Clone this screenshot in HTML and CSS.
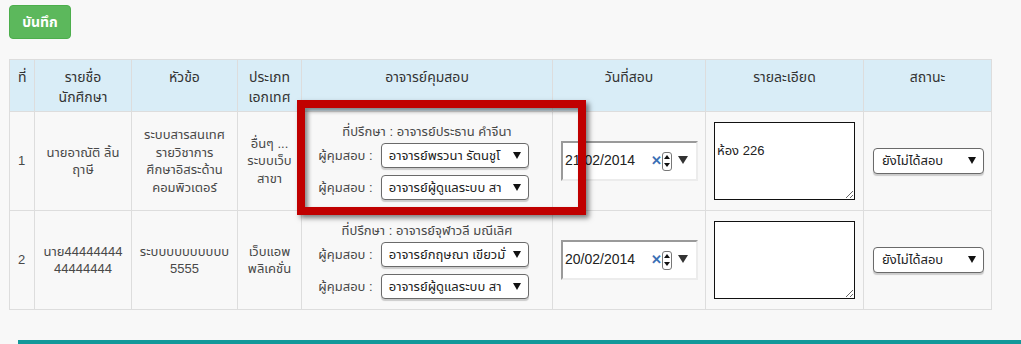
FILE: index.html
```html
<!DOCTYPE html>
<html lang="th">
<head>
<meta charset="utf-8">
<link rel="stylesheet" href="styles.css">
</head>
<body>
<div class="page">
  <button class="btn-save">บันทึก</button>
  <table class="grid">
    <colgroup>
      <col class="c1"><col class="c2"><col class="c3"><col class="c4"><col class="c5"><col class="c6"><col class="c7"><col class="c8">
    </colgroup>
    <thead>
      <tr>
        <th>ที่</th>
        <th>รายชื่อ<br>นักศึกษา</th>
        <th>หัวข้อ</th>
        <th>ประเภท<br>เอกเทศ</th>
        <th>อาจารย์คุมสอบ</th>
        <th>วันที่สอบ</th>
        <th>รายละเอียด</th>
        <th>สถานะ</th>
      </tr>
    </thead>
    <tbody>
      <tr>
        <td>1</td>
        <td>นายอาณัติ ลิ้น<br>ฤาษี</td>
        <td>ระบบสารสนเทศ<br>รายวิชาการ<br>ศึกษาอิสระด้าน<br>คอมพิวเตอร์</td>
        <td>อื่นๆ ...<br>ระบบเว็บ<br>สาขา</td>
        <td>
          <div class="advisor">ที่ปรึกษา : อาจารย์ประธาน คำจีนา</div>
          <div class="examiner"><span class="lbl">ผู้คุมสอบ :</span><div class="sel"><span class="sel-text">อาจารย์พรวนา รัตนชูโ</span><span class="caret"></span></div></div>
          <div class="examiner"><span class="lbl">ผู้คุมสอบ :</span><div class="sel"><span class="sel-text">อาจารย์ผู้ดูแลระบบ สา</span><span class="caret"></span></div></div>
        </td>
        <td>
          <div class="date">
            <span class="date-text">21/02/2014</span>
            <span class="clear">✕</span>
            <span class="spin"><span class="up"></span><span class="dn"></span></span>
            <span class="drop"></span>
          </div>
        </td>
        <td><textarea class="note">

ห้อง 226</textarea></td>
        <td><div class="sel status"><span class="sel-text">ยังไม่ได้สอบ</span><span class="caret"></span></div></td>
      </tr>
      <tr>
        <td>2</td>
        <td>นาย44444444<br>44444444</td>
        <td>ระบบบบบบบบบบ<br>5555</td>
        <td>เว็บแอพ<br>พลิเคชั่น</td>
        <td>
          <div class="advisor">ที่ปรึกษา : อาจารย์จุฬาวลี มณีเลิศ</div>
          <div class="examiner"><span class="lbl">ผู้คุมสอบ :</span><div class="sel"><span class="sel-text">อาจารย์กฤษณา เขียวมั่</span><span class="caret"></span></div></div>
          <div class="examiner"><span class="lbl">ผู้คุมสอบ :</span><div class="sel"><span class="sel-text">อาจารย์ผู้ดูแลระบบ สา</span><span class="caret"></span></div></div>
        </td>
        <td>
          <div class="date">
            <span class="date-text">20/02/2014</span>
            <span class="clear">✕</span>
            <span class="spin"><span class="up"></span><span class="dn"></span></span>
            <span class="drop"></span>
          </div>
        </td>
        <td><textarea class="note"></textarea></td>
        <td><div class="sel status"><span class="sel-text">ยังไม่ได้สอบ</span><span class="caret"></span></div></td>
      </tr>
    </tbody>
  </table>
  <div class="footer-bar"></div>
  <div class="highlight"></div>
</div>
</body>
</html>
```

FILE: styles.css
```css
html, body {
  margin: 0;
  padding: 0;
  background: #f8f8f8;
}
body {
  font-family: "Liberation Sans", Arial, "Noto Sans Thai", "Noto Sans", sans-serif;
  color: #333;
  font-size: 14px;
  overflow: hidden;
}
.page {
  position: relative;
  padding: 5px 0 0 9px;
  height: 344px;
  box-sizing: border-box;
}
.btn-save {
  display: block;
  width: 62px;
  height: 34px;
  background: #5cb85c;
  border: 1px solid #4cae4c;
  border-radius: 4px;
  color: #fff;
  font-family: inherit;
  font-weight: bold;
  font-size: 14px;
  padding: 0;
}
.grid {
  margin-top: 20px;
  width: 982px;
  border-collapse: collapse;
  table-layout: fixed;
  border: 1px solid #ddd;
}
.c1 { width: 25px; }
.c2 { width: 97px; }
.c3 { width: 106px; }
.c4 { width: 64px; }
.c5 { width: 251px; }
.c6 { width: 153px; }
.c7 { width: 158px; }
.c8 { width: 128px; }
.grid th {
  background: #d9edf7;
  border: 1px solid #ddd;
  font-weight: normal;
  font-size: 14px;
  line-height: 20px;
  vertical-align: top;
  padding: 7px 2px 4px;
  height: 40px;
  text-align: center;
}
.grid th:first-child { text-align: left; padding-left: 8px; }
.grid td {
  border: 1px solid #ddd;
  text-align: center;
  vertical-align: middle;
  font-size: 13px;
  line-height: 17.5px;
  padding: 0 2px;
  height: 98px;
  color: #484848;
}
.grid td:first-child { text-align: left; padding-left: 8px; }
.advisor {
  line-height: 20px;
  margin-bottom: 1px;
}
.examiner {
  display: flex;
  justify-content: center;
  align-items: center;
  gap: 8px;
  padding-right: 7px;
  margin-bottom: 7px;
}
.examiner:last-child { margin-bottom: 0; }
.lbl { white-space: nowrap; }
.sel {
  position: relative;
  width: 148px;
  height: 25px;
  box-sizing: border-box;
  border: 1px solid #6a6a6a;
  border-radius: 4px;
  background: #fff;
  box-shadow: 0 2px 1px rgba(0,0,0,0.18);
  text-align: left;
  display: flex;
  align-items: center;
  padding: 0 18px 0 7px;
  color: #222;
  font-size: 13px;
}
.sel-text {
  white-space: nowrap;
}
.caret {
  position: absolute;
  right: 7px;
  top: 8px;
  width: 0;
  height: 0;
  border-left: 4px solid transparent;
  border-right: 4px solid transparent;
  border-top: 7px solid #111;
}
.status {
  width: 111px;
  height: 26px;
  margin-left: 7px;
  padding-left: 8px;
}
.date {
  position: relative;
  width: 137px;
  height: 40px;
  box-sizing: border-box;
  margin-left: 6px;
  background: #fff;
  border-style: solid;
  border-width: 2px;
  border-color: #9a9a9a #ececec #ececec #9a9a9a;
  display: flex;
  align-items: center;
  padding-left: 2px;
  font-size: 14px;
  color: #222;
}
.date-text { width: 88px; text-align: left; }
.clear {
  color: #3a6fb5;
  font-weight: bold;
  font-size: 13px;
  width: 9px;
  margin-left: -2px;
}
.spin {
  display: flex;
  flex-direction: column;
  justify-content: space-around;
  align-items: center;
  width: 10px;
  height: 19px;
  box-sizing: border-box;
  border: 1px solid #777;
  border-radius: 3px;
  margin-left: 2px;
}
.up, .dn {
  width: 0;
  height: 0;
  border-left: 3px solid transparent;
  border-right: 3px solid transparent;
}
.up { border-bottom: 4px solid #111; }
.dn { border-top: 4px solid #111; }
.drop {
  width: 0;
  height: 0;
  border-left: 5px solid transparent;
  border-right: 5px solid transparent;
  border-top: 8px solid #333;
  margin-left: 6px;
  margin-top: -3px;
}
.note {
  display: block;
  width: 141px;
  height: 78px;
  box-sizing: border-box;
  margin: 0 0 0 6px;
  border: 1px solid #111;
  background: #fff;
  font-family: "Liberation Sans", Arial, "Noto Sans Thai", sans-serif;
  font-size: 13px;
  line-height: 17px;
  padding: 2px 2px;
  color: #222;
  resize: both;
}
.footer-bar {
  margin: 30px 0 0 9px;
  height: 10px;
  background: #12999a;
}
.highlight {
  position: absolute;
  left: 297px;
  top: 100px;
  width: 289px;
  height: 115px;
  box-sizing: border-box;
  border: 8px solid #c00000;
  box-shadow: 3px 3px 5px rgba(0,0,0,0.5), inset 3px 3px 4px rgba(0,0,0,0.45);
  pointer-events: none;
}
```
